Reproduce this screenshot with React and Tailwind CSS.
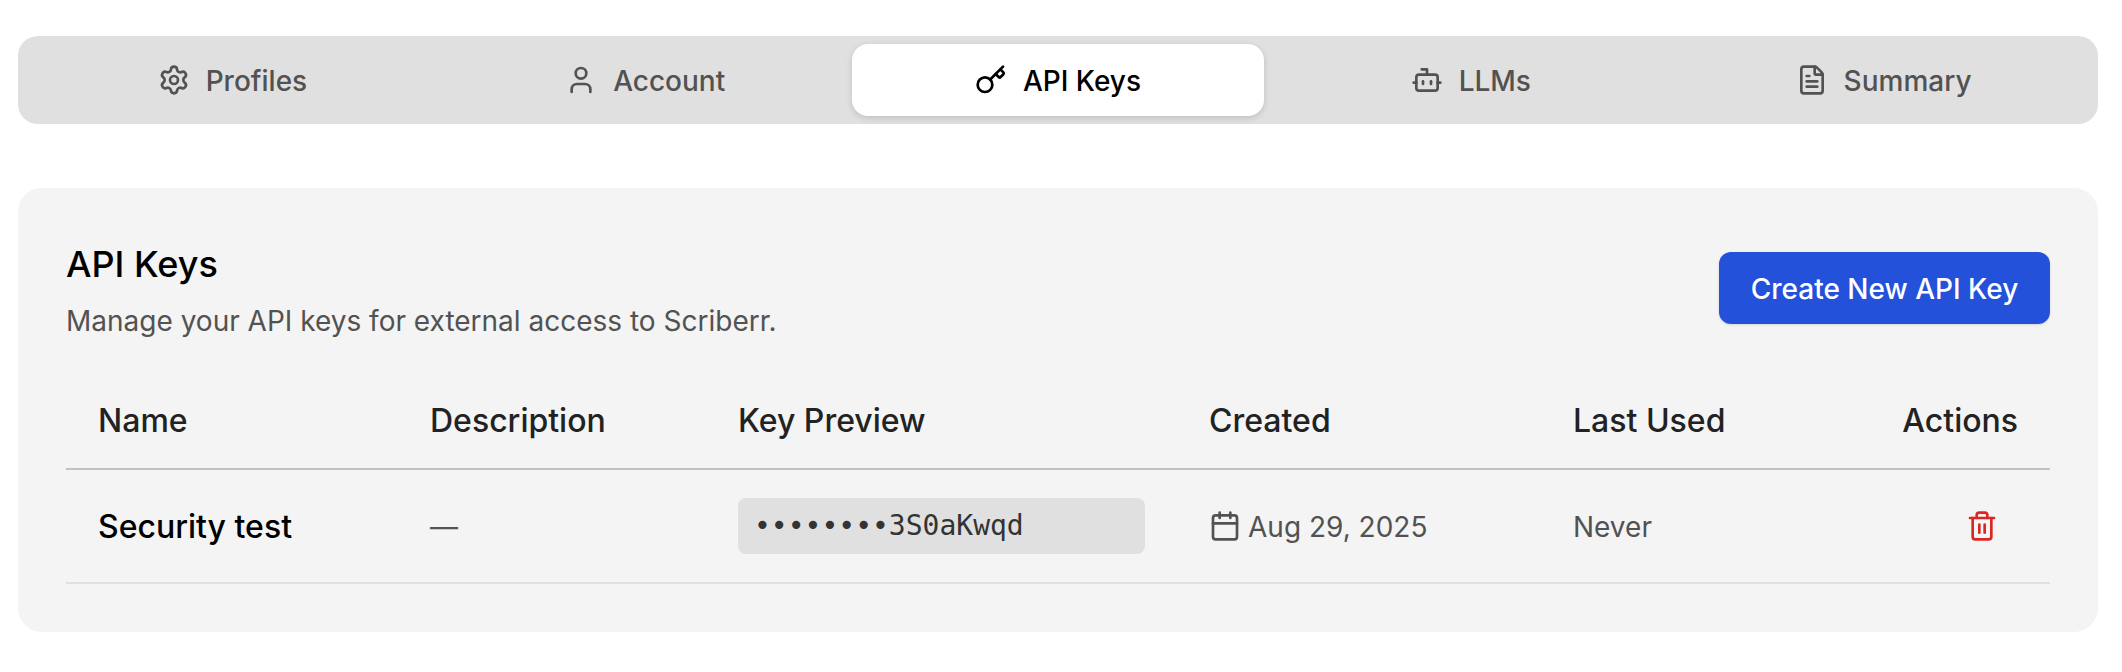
import React from "react";
import { Settings, User, Key, Bot, FileText, Calendar, Trash2 } from "lucide-react";

const tabs = [
  { label: "Profiles", Icon: Settings },
  { label: "Account", Icon: User },
  { label: "API Keys", Icon: Key, active: true },
  { label: "LLMs", Icon: Bot },
  { label: "Summary", Icon: FileText },
];

export default function App() {
  return (
    <div className="min-h-[672px] bg-white pt-9 pr-6 pb-10 pl-[18px] font-['Inter',sans-serif] text-[28px]">
      <div className="flex h-[88px] rounded-[20px] bg-[#e0e0e0] p-2">
        {tabs.map(({ label, Icon, active }) => (
          <div
            key={label}
            className={
              active
                ? "flex flex-1 items-center justify-center gap-4 rounded-2xl bg-white font-medium text-black shadow-[0_2px_6px_rgba(0,0,0,0.15)]"
                : "flex flex-1 items-center justify-center gap-4 rounded-2xl font-medium text-[#525252]"
            }
          >
            <Icon className="size-8" strokeWidth={2} />
            <span className="pt-[2px]">{label}</span>
          </div>
        ))}
      </div>

      <div className="mt-16 h-[444px] rounded-3xl bg-[#f4f4f4] px-12 pt-16">
        <div className="flex h-[84px] items-start justify-between">
          <div>
            <h2 className="-mt-[1px] text-[36px] leading-[26px] font-medium text-black">API Keys</h2>
            <p className="mt-[30px] leading-[28px] text-[#525252]">Manage your API keys for external access to Scriberr.</p>
          </div>
          <button className="h-[72px] w-[331px] rounded-xl bg-[#2451d9] pt-[2px] font-medium text-white shadow-sm">
            Create New API Key
          </button>
        </div>

        <table className="mt-[33px] w-full table-fixed border-collapse">
          <colgroup>
            <col className="w-[332px]" />
            <col className="w-[308px]" />
            <col className="w-[471px]" />
            <col className="w-[364px]" />
            <col className="w-[250px]" />
            <col />
          </colgroup>
          <thead>
            <tr className="h-[100px] border-b-2 border-[#c2c2c2] text-left text-[32px] text-[#222222]">
              <th className="px-8 pt-[5px] font-medium">Name</th>
              <th className="px-8 pt-[5px] font-medium">Description</th>
              <th className="px-8 pt-[5px] font-medium">Key Preview</th>
              <th className="px-8 pt-[5px] font-medium">Created</th>
              <th className="px-8 pt-[5px] font-medium">Last Used</th>
              <th className="px-8 pt-[5px] text-right font-medium">Actions</th>
            </tr>
          </thead>
          <tbody>
            <tr className="h-[114px] border-b-2 border-[#e0e0e0] text-[#525252]">
              <td className="px-8 pt-[2px] text-[32px] font-medium text-black">Security test</td>
              <td className="px-8 pt-[2px]">—</td>
              <td className="px-8">
                <div className="flex h-14 items-center rounded-lg bg-[#e0e0e0] px-4 font-['DejaVu_Sans_Mono',monospace] text-[#333333]">
                  ••••••••3S0aKwqd
                </div>
              </td>
              <td className="px-8">
                <div className="flex items-center gap-[7px]">
                  <Calendar className="size-8 shrink-0" />
                  <span className="pt-[2px]">Aug 29, 2025</span>
                </div>
              </td>
              <td className="px-8 pt-[2px]">Never</td>
              <td className="px-8">
                <div className="flex justify-end pr-5">
                  <Trash2 className="size-8 text-[#dc2626]" />
                </div>
              </td>
            </tr>
          </tbody>
        </table>
      </div>
    </div>
  );
}
